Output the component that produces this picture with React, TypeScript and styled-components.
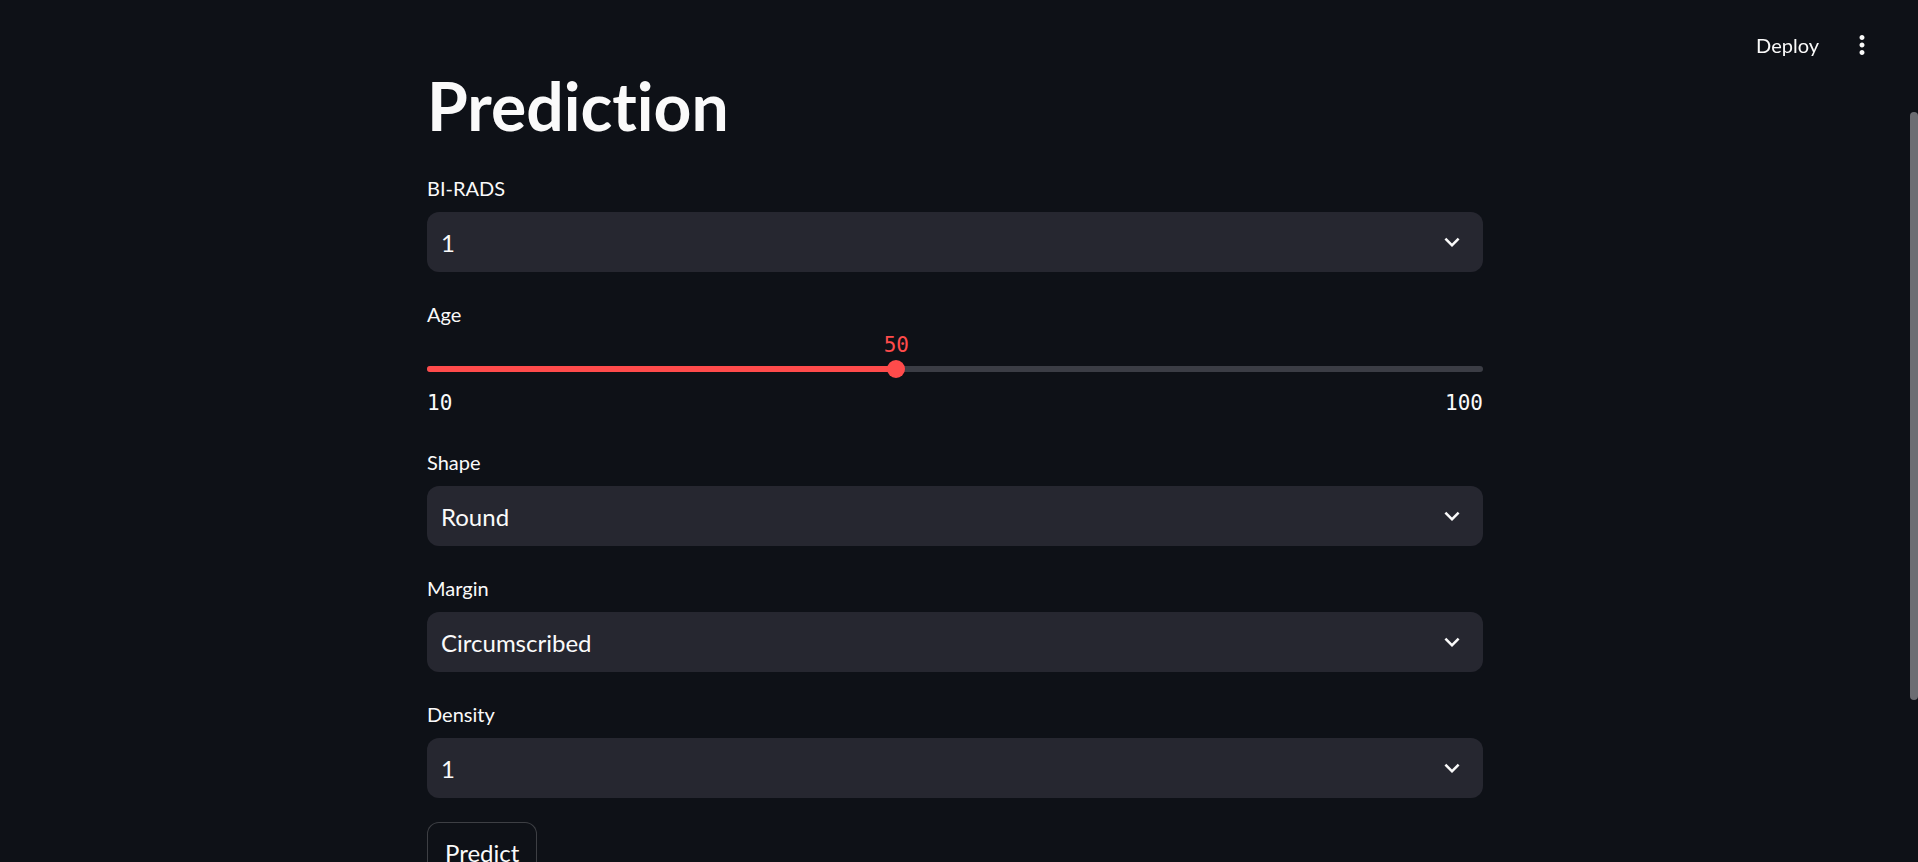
import React from "react";
import styled, { createGlobalStyle } from "styled-components";

const GlobalStyle = createGlobalStyle`
  html, body {
    margin: 0;
    padding: 0;
    background: #0e1117;
    overflow: hidden;
  }
  body {
    font-family: Lato, "Noto Sans", sans-serif;
    font-variant-ligatures: none;
    color: #fafafa;
  }
  * { box-sizing: border-box; }
`;

const Page = styled.div`
  position: relative;
  height: 100vh;
  overflow: hidden;
  padding-right: 8px;
  background: #0e1117;
`;

const Header = styled.header`
  position: fixed;
  top: 0;
  left: 0;
  right: 0;
  height: 90px;
  display: flex;
  align-items: center;
  justify-content: flex-end;
  gap: 28px;
  padding-right: 41px;
  z-index: 2;
`;

const DeployButton = styled.button`
  background: transparent;
  border: none;
  padding: 0;
  color: #fafafa;
  font-family: Lato, "Noto Sans", sans-serif;
  font-size: 20px;
  line-height: 24px;
  cursor: pointer;
`;

const MenuButton = styled.button`
  background: transparent;
  border: none;
  padding: 0;
  width: 30px;
  height: 30px;
  display: flex;
  align-items: center;
  justify-content: center;
  color: #fafafa;
`;

const ScrollThumb = styled.div`
  position: fixed;
  right: 0;
  top: 112px;
  width: 8px;
  height: 588px;
  border-radius: 4px;
  background: #6c6d72;
`;

const Column = styled.main`
  width: 1056px;
  margin: 0 auto;
  padding-top: 66px;
  display: flex;
  flex-direction: column;
  gap: 24px;
`;

const Title = styled.h1`
  margin: 0 0 1px;
  font-family: Lato, "Noto Sans", sans-serif;
  font-variant-ligatures: none;
  font-weight: 700;
  font-size: 66px;
  line-height: 79px;
  color: #fafafa;
`;

const Widget = styled.div`
  display: flex;
  flex-direction: column;
`;

const Label = styled.label`
  height: 36px;
  margin-bottom: 6px;
  display: flex;
  align-items: center;
  font-size: 20px;
  color: #fafafa;
`;

const SelectBox = styled.div`
  height: 60px;
  border-radius: 12px;
  background: #262730;
  display: flex;
  align-items: center;
  justify-content: space-between;
  padding: 0 16px 0 14px;
  font-size: 24px;
  color: #fafafa;
`;

const Chevron = styled.svg`
  width: 30px;
  height: 30px;
  flex: none;
`;

const SliderBody = styled.div`
  padding-top: 22px;
  padding-bottom: 7px;
`;

const TrackArea = styled.div`
  position: relative;
  height: 18px;
  display: flex;
  align-items: center;
`;

const Rail = styled.div`
  position: relative;
  width: 100%;
  height: 6px;
  border-radius: 3px;
  background: #3b3d45;
`;

const Fill = styled.div`
  position: absolute;
  left: 0;
  top: 0;
  bottom: 0;
  border-radius: 3px;
  background: #ff4b4b;
`;

const Thumb = styled.div`
  position: absolute;
  top: 50%;
  width: 18px;
  height: 18px;
  border-radius: 50%;
  background: #ff4b4b;
  transform: translate(-50%, -50%);
`;

const Mono = styled.span`
  font-family: "DejaVu Sans Mono", "Liberation Mono", monospace;
  font-size: 21px;
  line-height: 20px;
`;

const ThumbValue = styled(Mono)`
  position: absolute;
  bottom: calc(100% + 5px);
  transform: translateX(-50%);
  color: #ff4b4b;
`;

const TickRow = styled.div`
  margin-top: 15px;
  display: flex;
  justify-content: space-between;
  color: #fafafa;
`;

const Button = styled.button`
  align-self: flex-start;
  height: 60px;
  padding: 0 17px;
  border: 1px solid rgba(250, 250, 250, 0.2);
  border-radius: 12px;
  background: #0e1117;
  color: #fafafa;
  font-family: Lato, "Noto Sans", sans-serif;
  font-size: 24px;
  cursor: pointer;
`;

const Select = ({ label, value }: { label: string; value: string }) => (
  <Widget>
    <Label>{label}</Label>
    <SelectBox>
      <span>{value}</span>
      <Chevron viewBox="0 0 24 24" fill="#fafafa">
        <path d="M16.59 8.59L12 13.17 7.41 8.59 6 10l6 6 6-6z" />
      </Chevron>
    </SelectBox>
  </Widget>
);

const Slider = ({ label, min, max, value }: { label: string; min: number; max: number; value: number }) => {
  const pct = ((value - min) / (max - min)) * 100;
  return (
    <Widget>
      <Label>{label}</Label>
      <SliderBody>
        <TrackArea>
          <Rail>
            <Fill style={{ width: `${pct}%` }} />
          </Rail>
          <Thumb style={{ left: `${pct}%` }} />
          <ThumbValue style={{ left: `${pct}%` }}>{value}</ThumbValue>
        </TrackArea>
        <TickRow>
          <Mono>{min}</Mono>
          <Mono>{max}</Mono>
        </TickRow>
      </SliderBody>
    </Widget>
  );
};

export default function App() {
  return (
    <>
      <GlobalStyle />
      <Page>
        <Header>
          <DeployButton>Deploy</DeployButton>
          <MenuButton aria-label="menu">
            <svg width="30" height="30" viewBox="0 0 24 24" fill="#fafafa">
              <path d="M12 8c1.1 0 2-.9 2-2s-.9-2-2-2-2 .9-2 2 .9 2 2 2zm0 2c-1.1 0-2 .9-2 2s.9 2 2 2 2-.9 2-2-.9-2-2-2zm0 6c-1.1 0-2 .9-2 2s.9 2 2 2 2-.9 2-2-.9-2-2-2z" />
            </svg>
          </MenuButton>
        </Header>
        <Column>
          <Title>Prediction</Title>
          <Select label="BI-RADS" value="1" />
          <Slider label="Age" min={10} max={100} value={50} />
          <Select label="Shape" value="Round" />
          <Select label="Margin" value="Circumscribed" />
          <Select label="Density" value="1" />
          <Widget>
            <Button>Predict</Button>
          </Widget>
        </Column>
        <ScrollThumb />
      </Page>
    </>
  );
}
